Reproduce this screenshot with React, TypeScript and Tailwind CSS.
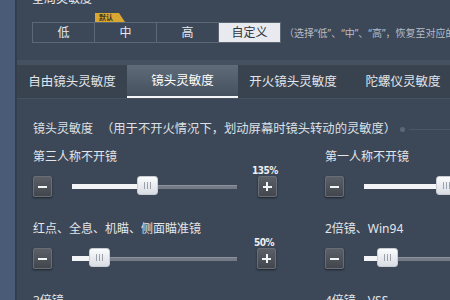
import React from "react";

const levels = ["低", "中", "高", "自定义"];
const tabs = ["自由镜头灵敏度", "镜头灵敏度", "开火镜头灵敏度", "陀螺仪灵敏度"];

const rows = [
  [
    { label: "第三人称不开镜", value: 135 },
    { label: "第一人称不开镜", value: 148 },
  ],
  [
    { label: "红点、全息、机瞄、侧面瞄准镜", value: 50 },
    { label: "2倍镜、Win94", value: 42 },
  ],
  [
    { label: "3倍镜", value: 60 },
    { label: "4倍镜、VSS", value: 60 },
  ],
];

// px per percent on the 165px track
const SCALE = 0.559;

function StepButton({ plus }: { plus?: boolean }) {
  return (
    <div className="relative w-[19px] h-[21px] shrink-0 rounded-[2px] border border-[#686d76] bg-gradient-to-b from-[#5b6068] to-[#42464d] shadow-[0_1px_2px_rgba(0,0,0,0.5)] flex items-center justify-center">
      <div className="w-[9px] h-[2px] bg-[#f2f3f5]" />
      {plus && <div className="absolute w-[2px] h-[9px] bg-[#f2f3f5]" />}
    </div>
  );
}

function Slider({ value }: { value: number }) {
  const pos = value * SCALE;
  return (
    <div className="relative w-[165px] h-[21px] shrink-0 flex items-center">
      <div className="w-full h-[4px] bg-[#747b86] border-t border-[#8d939c]" />
      <div className="absolute left-0 h-[5px] bg-[#f3f4f6]" style={{ width: pos }} />
      <div
        className="absolute top-[0px] w-[21px] h-[19px] rounded-[3px] border border-[#c9cdd3] bg-gradient-to-b from-[#fafbfc] to-[#d9dde3] flex items-center justify-center gap-[2px]"
        style={{ left: pos - 10.5 }}
      >
        <div className="w-px h-[7px] bg-[#9ca2ab]" />
        <div className="w-px h-[7px] bg-[#9ca2ab]" />
        <div className="w-px h-[7px] bg-[#9ca2ab]" />
      </div>
    </div>
  );
}

function Setting({ label, value }: { label: string; value: number }) {
  return (
    <div className="flex flex-col">
      <div className="text-[12px] leading-[16px] whitespace-nowrap text-[#e3e6ea]">{label}</div>
      <div className="flex items-end gap-[20px]">
        <StepButton />
        <Slider value={value} />
        <div className="flex flex-col items-center">
          <div className="text-[10px] leading-[11px] font-bold tracking-[-0.5px] font-['DejaVu_Sans_Condensed','Liberation_Sans',sans-serif] text-[#eef0f3] -ml-[5px]">
            {value}%
          </div>
          <StepButton plus />
        </div>
      </div>
    </div>
  );
}

export default function App() {
  return (
    <div className="w-[450px] h-[300px] overflow-hidden flex bg-[#3c4757] text-[#e4e7ec] font-['Noto_Sans','Noto_Sans_CJK_SC',sans-serif]">
      <div className="w-[15px] shrink-0 bg-[#4a5b77]" />
      <div className="w-[2px] shrink-0 bg-[#343e4b]" />
      <div className="flex-1 min-w-0 flex flex-col">
        {/* global sensitivity */}
        <div className="pl-[15px] h-[60px] shrink-0">
          <div className="text-[12px] leading-[14px] -mt-[8px] text-[#e8eaee]">全局灵敏度</div>
          <div className="mt-[7px] ml-[63px] w-[30px] h-[9px] bg-[#d9a732] [clip-path:polygon(0_0,80%_0,100%_100%,0_100%)] text-[7px] leading-[9px] pl-[4px] text-[#3b3220] font-bold">
            默认
          </div>
          <div className="flex items-center">
            <div className="flex h-[21px] border border-[#5d6876]">
              {levels.map((l, i) => (
                <div
                  key={l}
                  className={
                    i === 3
                      ? "w-[61px] bg-[#e8eaef] text-[#2f3640] text-[12px] leading-[19px] text-center"
                      : "w-[62px] border-r border-[#5d6876] text-[12px] leading-[19px] text-center text-[#e6e9ee]"
                  }
                >
                  {l}
                </div>
              ))}
            </div>
            <div className="ml-[3px] text-[10px] leading-[12px] whitespace-nowrap text-[#b7bdc6]">
              （选择“低”、“中”、“高”，恢复至对应的默认设置）
            </div>
          </div>
        </div>

        {/* tabs */}
        <div className="h-[5px] shrink-0 bg-[#455060]" />
        <div className="flex h-[34px] shrink-0 bg-[#39434f] border-b border-[#46515f]">
          {tabs.map((t, i) => (
            <div
              key={t}
              className={
                i === 1
                  ? "w-[111px] shrink-0 bg-gradient-to-b from-[#606b7a] to-[#465160] border-b-2 border-[#f4f5f7] text-center text-[12.5px] leading-[32px] text-white"
                  : "w-[110px] shrink-0 text-center text-[12.5px] leading-[34px] text-[#e2e5ea]"
              }
            >
              {t}
            </div>
          ))}
        </div>

        {/* content */}
        <div className="pl-[16px] pt-[22px] flex flex-col">
          <div className="flex items-center text-[12px] leading-[16px] whitespace-nowrap text-[#dde1e6]">
            <span>镜头灵敏度</span>
            <span className="ml-[8px] text-[12.3px]">（用于不开火情况下，划动屏幕时镜头转动的灵敏度）</span>
            <div className="ml-[4px] w-[5px] h-[5px] rounded-full bg-[#5c6776] shrink-0" />
            <div className="ml-[4px] flex-1 h-px bg-[#4c5766]" />
          </div>
          <div className="flex flex-col gap-[24px] mt-[12px]">
            {rows.map((r, i) => (
              <div key={i} className="flex">
                <div className="w-[292px] shrink-0">
                  <Setting label={r[0].label} value={r[0].value} />
                </div>
                <Setting label={r[1].label} value={r[1].value} />
              </div>
            ))}
          </div>
        </div>
      </div>
    </div>
  );
}
